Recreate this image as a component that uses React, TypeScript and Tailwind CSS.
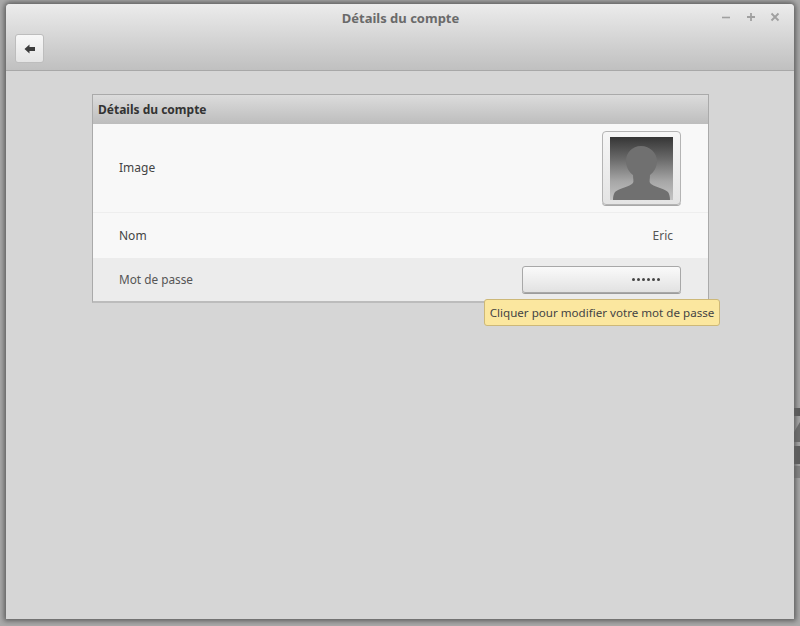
import React from "react";

const font = { fontFamily: '"Noto Sans", sans-serif' };

function Avatar() {
  return (
    <svg width="63" height="63" viewBox="0 0 63 63" className="block">
      <defs>
        <linearGradient id="avbg" x1="0" y1="0" x2="0" y2="1">
          <stop offset="0" stopColor="#353535" />
          <stop offset="0.35" stopColor="#6a6a6a" />
          <stop offset="0.7" stopColor="#a6a6a6" />
          <stop offset="1" stopColor="#c4c4c4" />
        </linearGradient>
      </defs>
      <rect width="63" height="63" fill="url(#avbg)" />
      <path
        d="M31 9 C22 9 16 16 16 24 C16 30 19 35 23 38 C23 42 24 44 23 46 C20 50 9 51 5 55 C3.5 57 3 60 3 63 L60 63 C60 60 59.5 57 58 55 C54 51 43 50 40 46 C39 44 40 42 40 38 C44 35 47 30 47 24 C47 16 40 9 31 9 Z"
        fill="#707070"
      />
    </svg>
  );
}

export default function App() {
  return (
    <div className="relative w-[800px] h-[626px] overflow-hidden bg-[#a9a9a9] pt-[4px] pl-[6px] pr-[6px] pb-[7px]" style={font}>
      <svg className="absolute right-0 top-[408px]" width="6" height="70" viewBox="0 0 6 70">
        <path d="M0 0H6V8H0Z" fill="#5a5a5a" />
        <path d="M0 24L6 14V34H0Z" fill="#6e6e6e" />
        <path d="M0 38H6V56H0Z" fill="#5e5e5e" />
        <path d="M0 58H6V70H0Z" fill="#858585" />
      </svg>
      <div className="relative h-full flex flex-col bg-[#d6d6d6] rounded-t-[4px] shadow-[0_0_5px_2px_#5f5f5f]">
        <header className="relative h-[67px] shrink-0 bg-gradient-to-b from-[#ececec] to-[#c0c0c0] border-b border-[#a8a8a8] rounded-t-[4px]">
          <div className="text-center pt-[5px] pl-[1px] text-[13px] leading-[18px] font-bold text-[#6a6a6a]">Détails du compte</div>
          <div className="absolute right-[11px] top-[6px] flex items-center gap-[8px]">
            <svg width="16" height="14" viewBox="0 0 16 14"><path d="M3 7.5h8" stroke="#a0a0a0" strokeWidth="1.6" /></svg>
            <svg width="16" height="14" viewBox="0 0 16 14"><path d="M4 7h8M8 3v8" stroke="#a0a0a0" strokeWidth="1.8" /></svg>
            <svg width="16" height="14" viewBox="0 0 16 14"><path d="M4.5 3.5l7 7M11.5 3.5l-7 7" stroke="#a0a0a0" strokeWidth="1.9" /></svg>
          </div>
          <div className="pl-[9px] pt-[7px]">
            <button className="w-[29px] h-[29px] flex items-center justify-center rounded-[3px] border border-[#bdbdbd] bg-gradient-to-b from-[#f8f8f8] to-[#e4e4e4]">
              <svg width="12" height="10" viewBox="0 0 12 10"><path d="M0.5 5L5.5 0.5V3H11V7H5.5V9.5Z" fill="#3c3c3c" /></svg>
            </button>
          </div>
        </header>
        <main className="relative flex-1 pt-[23px] pl-[86px] pr-[85px]">
          <section className="border border-[#aaaaaa] border-b-2 border-b-[#bcbcbc]">
            <div className="h-[29px] flex items-center pl-[5px] bg-gradient-to-b from-[#dcdcdc] to-[#bdbdbd] text-[12px] font-bold text-[#333333]">Détails du compte</div>
            <div className="h-[89px] flex items-center justify-between pl-[26px] pr-[27px] bg-[#f8f8f8] border-b border-[#eeeeee]">
              <span className="text-[12px] text-[#444444]">Image</span>
              <div className="w-[79px] h-[74px] flex items-center justify-center rounded-[4px] border border-[#b4b4b4] bg-gradient-to-b from-[#f6f6f6] to-[#e4e4e4] shadow-[0_1px_0_#a8a8a8]">
                <Avatar />
              </div>
            </div>
            <div className="h-[45px] flex items-center justify-between pl-[26px] pr-[35px] bg-[#f8f8f8]">
              <span className="text-[12px] text-[#444444]">Nom</span>
              <span className="text-[12px] text-[#555555]">Eric</span>
            </div>
            <div className="h-[43px] flex items-center justify-between pl-[26px] pr-[27px] bg-[#ececec]">
              <span className="text-[11.8px] text-[#555555]">Mot de passe</span>
              <button className="w-[159px] h-[27px] flex items-center justify-end pr-[20px] rounded-[3px] border border-[#a8a8a8] bg-gradient-to-b from-[#fafafa] to-[#e2e2e2] shadow-[0_1px_0_#9c9c9c]">
                <span className="flex gap-[2px]">
                  {[0, 1, 2, 3, 4, 5].map((i) => (
                    <span key={i} className="w-[3px] h-[3px] rounded-full bg-[#444444]" />
                  ))}
                </span>
              </button>
            </div>
          </section>
        </main>
      </div>
      <div className="absolute left-[484px] top-[299px] w-[236px] h-[27px] flex items-center justify-center rounded-[3px] border border-[#cdb878] bg-[#fbe79f] text-[11.6px] text-[#444444] whitespace-nowrap">
        Cliquer pour modifier votre mot de passe
      </div>
    </div>
  );
}
